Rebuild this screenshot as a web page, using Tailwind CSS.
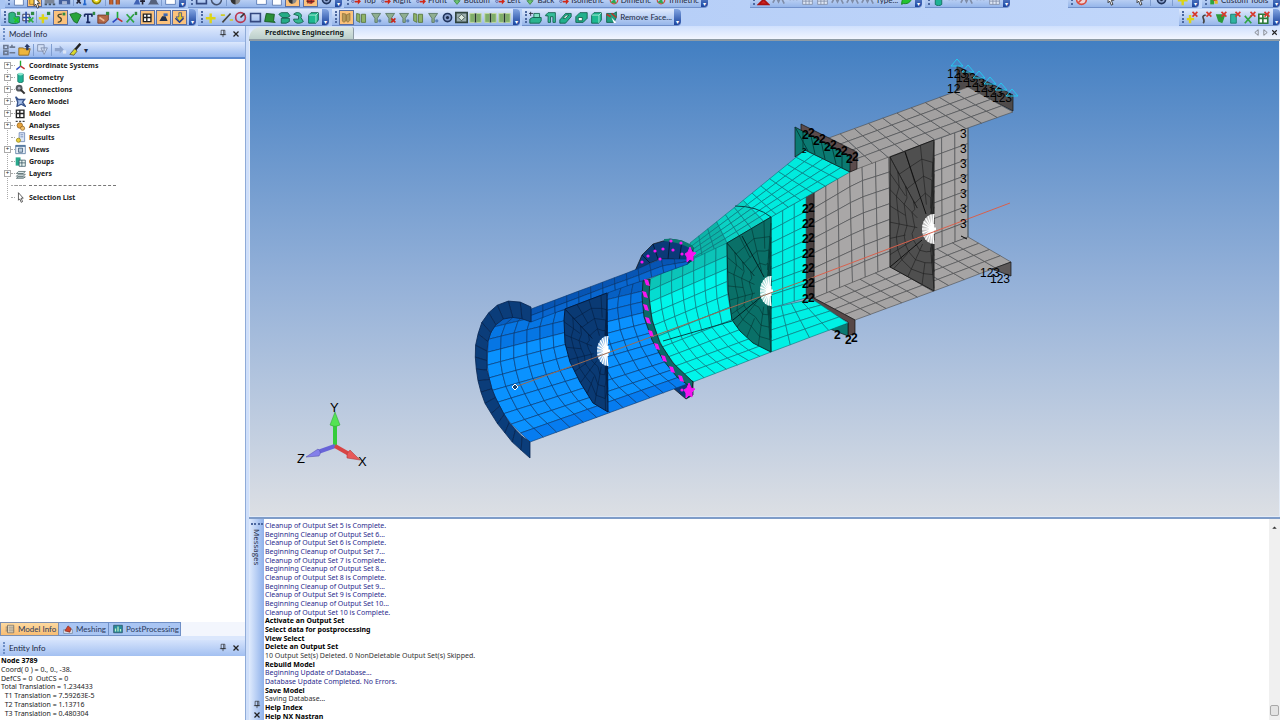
<!DOCTYPE html>
<html lang="en">

<head>
  <meta charset="UTF-8">
  <title>Predictive Engineering</title>
  <script src="https://cdn.jsdelivr.net/npm/@tailwindcss/browser@4"></script>
</head>

<body class="relative h-screen flex flex-col overflow-hidden bg-[#b9d0f8] text-[#1c2840] text-[8px] leading-none font-[Lato,sans-serif]">
  <header class="shrink-0 h-[26px] overflow-hidden bg-linear-to-r from-[#a9c5f3] to-[#c3d8fb]">
    <div class="flex -mt-2 h-4" id="rowTop"></div>
    <div class="flex mt-px h-[17px]" id="rowMain"></div>
  </header>
  <span class="absolute left-[30px] -top-1 w-[13px]" data-icon="cursor"></span>

  <div class="flex flex-1 min-h-0">
    <aside class="w-[245px] shrink-0 flex flex-col bg-white">
      <div class="flex items-center h-4 pl-[3px] pr-1 gap-[3px] bg-linear-to-b from-[#dfeafd] to-[#b3cbf5]">
        <span class="w-[3px] h-3 border-l-2 border-dotted border-[#6f8fc6]"></span>
        <h2 class="flex-1">Model Info</h2>
        <button class="w-[10px]" data-icon="pin" aria-label="Pin"></button>
        <button class="w-[10px]" data-icon="close" aria-label="Close"></button>
      </div>
      <div class="flex items-center h-[17px] pl-[3px] gap-[2px] border-b-2 border-[#5f8bd0] bg-linear-to-b from-[#dce8fd] to-[#98b8ee]" id="treeBar"></div>
      <ul class="relative flex-1 pl-1 font-bold font-['Noto_Sans',sans-serif] text-[#222]" id="tree"></ul>
      <div class="flex h-[14px] bg-[#f3f6fd] text-[#2b3a5c] whitespace-nowrap">
        <button class="flex items-center gap-[3px] pl-1 w-[59px] border border-[#7e8fae] bg-linear-to-b from-[#fcd9a0] to-[#f9bd72]"><span class="w-[10px] shrink-0" data-icon="list"></span>Model Info</button>
        <button class="flex items-center gap-[3px] pl-1 w-[50px] border border-l-0 border-[#6f8fc6] bg-[#a9c5f3]"><span class="w-[10px] shrink-0" data-icon="meshing"></span>Meshing</button>
        <button class="flex items-center gap-[3px] pl-1 w-[72px] border border-l-0 border-[#6f8fc6] bg-[#a9c5f3]"><span class="w-[10px] shrink-0" data-icon="post"></span>PostProcessing</button>
      </div>
      <div class="h-1 bg-[#dbe7fc]"></div>
      <div class="flex items-center h-4 pl-[3px] pr-1 gap-[3px] bg-linear-to-b from-[#d5e3fc] to-[#a3c0f1]">
        <span class="w-[3px] h-3 border-l-2 border-dotted border-[#6f8fc6]"></span>
        <h2 class="flex-1">Entity Info</h2>
        <button class="w-[10px]" data-icon="pin" aria-label="Pin"></button>
        <button class="w-[10px]" data-icon="close" aria-label="Close"></button>
      </div>
      <div class="h-[64px] shrink-0 pl-px pt-px pb-[2px] flex flex-col justify-between text-[7px] leading-[8px] text-[#222] whitespace-pre font-['Noto_Sans',sans-serif]">
        <b class="text-black">Node 3789</b>
        <span>Coord( 0 ) = 0., 0., -38.</span>
        <span>DefCS = 0  OutCS = 0</span>
        <span>Total Translation = 1.234433</span>
        <span>  T1 Translation = 7.59263E-5</span>
        <span>  T2 Translation = 1.13716</span>
        <span>  T3 Translation = 0.480304</span>
      </div>
    </aside>

    <div class="w-1 shrink-0 bg-[#cfdffa] border-l border-[#8fabd8]"></div>

    <main class="flex-1 min-w-0 flex flex-col">
      <div class="flex items-end h-[15px] shrink-0 border-b-2 border-[#8d9ba5] bg-linear-to-b from-[#cfe0fd] to-[#f2f6fe]">
        <h1 class="h-[12px] w-[105px] pl-4 rounded-tl-xl rounded-tr-xs border-r border-[#8d9ba5] bg-linear-to-b from-[#dde8e4] to-[#bccfcb] text-[7px] leading-[12px] font-bold text-[#16241f] whitespace-nowrap font-['Noto_Sans',sans-serif]">Predictive Engineering</h1>
        <div class="ml-auto flex pr-px self-center">
          <button class="w-[9px]" data-icon="prev" aria-label="Previous"></button>
          <button class="w-[9px]" data-icon="next" aria-label="Next"></button>
          <button class="w-[9px]" data-icon="close" aria-label="Close"></button>
        </div>
      </div>

      <div class="flex-1 min-h-0 border border-t-0 border-[#e3ebf7] bg-linear-to-b from-[#427fc2] via-[#93b0d8] to-[#dcdfe4]">
        <svg id="scene" class="block w-full h-full" viewBox="250 41 1029 475" stroke-linejoin="round"></svg>
      </div>

      <section class="h-[203px] shrink-0 flex overflow-hidden border-t-2 border-[#7f9cc8] bg-white">
        <div class="w-[15px] shrink-0 flex flex-col items-center pt-1 bg-linear-to-r from-[#e0ebfd] to-[#8fb1ea]">
          <span class="w-3 border-t-2 border-dotted border-[#4c68a0]"></span>
          <h2 class="mt-1 [writing-mode:vertical-rl] text-[8px] leading-[10px] font-['Open_Sans',sans-serif]">Messages</h2>
          <button class="mt-auto w-[10px]" data-icon="pin" aria-label="Pin"></button>
          <button class="w-[10px]" data-icon="close" aria-label="Close"></button>
        </div>
        <div class="flex-1 pl-px pt-[3px] -mb-px flex flex-col justify-between text-[7px] leading-[8px] whitespace-nowrap font-['Noto_Sans',sans-serif]" id="messages"></div>
        <div class="w-[11px] flex flex-col items-center bg-[#f0f0f0]">
          <span class="w-[9px] mt-1" data-icon="up"></span>
          <span class="w-[9px] h-[11px] mt-auto mb-1 rounded-xs border border-[#a8a8a8] bg-[#e4e4e4]"></span>
        </div>
      </section>
    </main>
  </div>

  <script>
    const X = '<path d="M8 1l6 6M14 1l-6 6" stroke="#d8382c" stroke-width="2"/>';
    const ICONS = {
      doc: '<path d="M3 1h8l3 3v11H3z" fill="#fff" stroke="#5672a8"/>',
      open: '<path d="M1 5h5l2 2h7l-3 8H1z" fill="#f5c64a" stroke="#8c6414"/>',
      save: '<path d="M1 2h14v12H1z" fill="#46619c"/><path d="M4 2h8v5H4z" fill="#dfe7f7"/><path d="M5 10h6v4H5z" fill="#aab8d6"/>',
      print: '<path d="M2 7h12v6H2z" fill="#7b8698"/><path d="M4 2h8v5H4z" fill="#fff" stroke="#667"/><path d="M2 14h3M7 14h3M12 14h3" stroke="#456" stroke-width="2"/>',
      num: '<path d="M2 13l5-6M2 7l5 6" stroke="#223" stroke-width="2"/><path d="M12 4v10M10 14h4" stroke="#2266cc" stroke-width="2"/>',
      gear: '<circle cx="8" cy="8" r="5" fill="#ecdc2c" stroke="#8a7d00" stroke-width="2"/><circle cx="8" cy="8" r="2" fill="#fff"/>',
      undo: '<path d="M2 14V7h4v7M10 14V7h4v7" fill="#c4622c" stroke="#823814"/>',
      sum: '<path d="M2 14l5-9 3 9z" fill="#3f62b4"/><path d="M13 6v8M10 10h6" stroke="#223" stroke-width="2"/>',
      hill: '<path d="M1 14c3-1 3-8 7-9 4 1 4 8 7 9z" fill="#56627c"/>',
      win: '<path d="M2 2h12v12H2z" fill="#fff" stroke="#4f72b0"/><path d="M2 2h12v3H2z" fill="#5c84c8"/>',
      rotate: '<path d="M3 5a6 6 0 1 0 9-1" fill="none" stroke="#44506c" stroke-width="2"/><path d="M8 1l6 1-3 5z" fill="#44506c"/>',
      shade: '<circle cx="8" cy="8" r="6" fill="#888"/><path d="M8 2a6 6 0 0 0 0 12z" fill="#333"/>',
      shadeRed: '<circle cx="8" cy="8" r="6" fill="#c83c2c"/><path d="M4 2v12M9 2v12M2 6h12M2 11h12" stroke="#502020"/>',
      layers: '<path d="M2 12l3-3h10l-3 3zM2 8l3-3h10l-3 3zM2 15l3-2h10l-3 2z" fill="#dfe9ea" stroke="#3d5558"/>',
      arrowRed: '<circle cx="3" cy="10" r="2" fill="none" stroke="#448"/><path d="M6 9h5V6l5 4-5 5v-3H6z" fill="#d02818"/>',
      arrowGreen: '<path d="M6 4h4v5h3l-5 6-5-6h3z" fill="#6cc070" stroke="#2c7c34"/>',
      globe: '<circle cx="8" cy="8" r="6" fill="none" stroke="#d84c40" stroke-width="2"/><path d="M2 12l10 2-3-8z" fill="#2fa850"/>',
      clock: '<circle cx="8" cy="8" r="6" fill="#f0d4d4" stroke="#d84c40" stroke-width="2"/><path d="M4 12l8-8" stroke="#d84c40" stroke-width="2"/>',
      pinRed: '<path d="M8 1v8M2 14l6-6 6 6z" fill="#c22" stroke="#a11" stroke-width="2"/>',
      tbl: '<path d="M2 3h12v11H2zM2 7h12M2 10h12M6 3v11M10 3v11" fill="#dfe7f4" stroke="#7f8da8"/>',
      wave: '<path d="M1 12l4-7 3 6 3-6 4 8" fill="none" stroke="#7f8da8" stroke-width="2"/>',
      leaf: '<path d="M2 14C2 6 6 2 15 2c0 8-4 12-11 11z" fill="#25c42f" stroke="#0e7a18"/>',
      cubes: '<path d="M1 3c3-2 6-2 8 0v4h5v7c-4 2-9 2-13 0z" fill="#2fb57f" stroke="#0e6846"/><path d="M7 8l6 6M13 8l-5 6" stroke="#22c522" stroke-width="2"/><path d="M11 1h4v4h-4z" fill="#3f9a4e"/>',
      move: '<path d="M1 4h8v8H1z" fill="#f5f8ff" stroke="#223"/><path d="M5 1v14M1 8h10" stroke="#2748a4" stroke-width="2"/><path d="M8 8l6 6M14 8l-6 6" stroke="#2fae40" stroke-width="2"/><path d="M11 1h4v4h-4z" fill="#2f8a42"/>',
      plus: '<path d="M7 3v12M1 9h12" stroke="#dcd416" stroke-width="3"/>',
      plusPt: '<path d="M6 4v11M1 9h11" stroke="#dcd416" stroke-width="3"/><path d="M11 1h4v4h-4z" fill="#2f8a42"/>',
      curve: '<path d="M10 3C2 3 4 7 7 8s4 6-3 7" fill="none" stroke="#4d4a30" stroke-width="2"/><path d="M11 1h4v4h-4z" fill="#2f8a42"/>',
      surf: '<path d="M1 4l8-2 6 3-5 10-4-2z" fill="#28a43a" stroke="#126420"/>',
      surfGreen: '<path d="M4 3l10 1-1 8 2 2-13-1z" fill="#2a8f38" stroke="#0f5019"/>',
      text: '<path d="M2 4h9v3M2 4v3M6 4v10M4 14h5" fill="none" stroke="#15255e" stroke-width="2"/><path d="M12 1h3v4h-3z" fill="#2f8a42"/>',
      brick: '<path d="M1 5h10l3-3v9l-4 4H1z" fill="#b26848" stroke="#6c3522"/><path d="M3 8l6 4" stroke="#eabb98" stroke-width="2"/><path d="M11 1h4v4h-4z" fill="#2f8a42"/>',
      csys: '<path d="M8 9V1" stroke="#21a832" stroke-width="2"/><path d="M8 9l-6 5" stroke="#2c48c2" stroke-width="2"/><path d="M8 9l6 4" stroke="#c22c2c" stroke-width="2"/>',
      node: '<path d="M2 4l9 10M11 4L2 14" stroke="#2fa542" stroke-width="2"/><path d="M12 1h3v4h-3z" fill="#2f8a42"/>',
      grid: '<path d="M2 3h11v11H2zM2 8h11M7 3v11" fill="#fff" stroke="#222" stroke-width="2"/>',
      load: '<path d="M2 13h12l-3-7H6z" fill="#20304c"/><path d="M8 2h6v4H8z" fill="#3c68b4"/>',
      down: '<path d="M7 1v6H3l5 7 6-7h-3V1z" fill="#e6c928" stroke="#27408c"/><path d="M2 9l6 6 6-6" stroke="#27408c" stroke-width="2"/>',
      line: '<path d="M3 14L13 3" stroke="#444" stroke-width="2"/><path d="M1 5h5M12 11h4" stroke="#cfcb27" stroke-width="2"/>',
      circle: '<circle cx="8" cy="8" r="6" fill="none" stroke="#ba3850" stroke-width="2"/><path d="M8 8l5-5" stroke="#333" stroke-width="2"/>',
      rect: '<path d="M2 3h12v10H2z" fill="none" stroke="#334880" stroke-width="2"/>',
      extrude: '<path d="M1 4l3-2h8l3 4-3 2H5zM4 9h10v4l-4 2H4z" fill="#25ac86" stroke="#0d5a45"/>',
      revolve: '<path d="M2 4c5-5 12 0 9 4l3 5c-5 4-12 2-12-3h6V6z" fill="#35b890" stroke="#0d5a45"/>',
      block: '<path d="M2 5l3-3h9v9l-3 4H2z" fill="#1db990" stroke="#0a5a45"/><path d="M2 5h9v10M11 5l3-3" fill="none" stroke="#bff3e2"/>',
      panel: '<path d="M2 3l4 1v10l-4-2zM8 4h5v10H8z" fill="#8fb468" stroke="#56733a"/>',
      panelOn: '<path d="M2 2l5 1v10l-3 2-2-2zM8 4l5-2v10l-3 3-2-2z" fill="#b79a58" stroke="#8a6c34"/>',
      funnel: '<path d="M2 3h11L9 9v5H6V9z" fill="#8fae90" stroke="#54735e"/><circle cx="12" cy="12" r="2" fill="#5d83bc"/>',
      funnelX: '<path d="M2 3h11L9 9v5H6V9z" fill="#8fae90" stroke="#54735e"/><path d="M9 9l5 5M14 9l-5 5" stroke="#c8281c" stroke-width="2"/>',
      target: '<circle cx="8" cy="8" r="5" fill="#8aa0cc" stroke="#20345c" stroke-width="2"/><circle cx="8" cy="8" r="2" fill="#1c2c4c"/>',
      boxT: '<path d="M1 2h14v12H1z" fill="#9dafb0" stroke="#30443e" stroke-width="2"/><path d="M8 4l4 4-4 4-4-4z" fill="#dde9de" stroke="#30443e"/>',
      bars: '<path d="M1 3h6v11H1zM9 3h6v11H9z" fill="#7fae6a" stroke="#c9dca0"/><path d="M8 3v11" stroke="#23372c" stroke-width="2"/>',
      csave: '<path d="M1 10l3-2h11v4l-2 3H1z" fill="#2bb48f" stroke="#0c5a45"/><path d="M6 3h7v5H6z" fill="#7fe0c3" stroke="#0c5a45"/><path d="M2 1v5M0 3h5" stroke="#223"/>',
      arch: '<path d="M2 5l3-3h9v12h-3V7H8v7H5V6H2z" fill="#35bd99" stroke="#0c5a45"/>',
      slab: '<path d="M1 11l7-8h7v4l-7 8H1z" fill="#22b08c" stroke="#0c5a45"/><path d="M5 9l4-4h3l-4 4z" fill="#fff" stroke="#0c5a45"/>',
      shell: '<path d="M1 7l5-5h9v7l-5 5H1z" fill="#22b08c" stroke="#0c5a45"/><path d="M4 8h5v4H4z" fill="#fff" stroke="#0c5a45"/>',
      delFace: '<path d="M2 3h9l3-2v7l-3 6H2z" fill="#22a080" stroke="#0c5a45"/><path d="M2 4l5 3M8 3l6 5" stroke="#b8382c" stroke-width="2"/><path d="M8 8l6 6-3 1z" fill="#fff"/>',
      delPlus: '<path d="M5 5v10M1 10h9" stroke="#dcd416" stroke-width="3"/>' + X,
      delCurve: '<path d="M7 5c-8 2 1 5-3 10" fill="none" stroke="#444" stroke-width="2"/>' + X,
      delSurf: '<path d="M1 4h12l-4 11-5-2z" fill="#2c9a3a"/>' + X,
      delSolid: '<path d="M2 4h7v11H2z" fill="#2fb3a0" stroke="#176"/>' + X,
      delNode: '<path d="M1 6l8 9M9 6l-8 9" stroke="#2fa542" stroke-width="2"/>' + X,
      delGrid: '<path d="M1 4h11v11H1zM1 9h11M6 4v11" fill="#fff" stroke="#2b7a38" stroke-width="2"/>' + X,
      cursor: '<path d="M5 1l7 8H9l2 5-2 1-2-5-2 2z" fill="#fff" stroke="#222"/>',
      tools: '<path d="M2 8h6v7H2z" fill="#2fa53c"/><circle cx="10" cy="6" r="4" fill="#d2402c"/><path d="M9 9h5v5H9z" fill="#e8b824"/>',
      geom: '<path d="M4 3h8v11c-2 2-6 2-8 0z" fill="#1fb295" stroke="#0d6856"/><ellipse cx="8" cy="3" rx="4" ry="2" fill="#8be6cf"/>',
      conn: '<circle cx="6" cy="6" r="5" fill="#555b60"/><circle cx="6" cy="6" r="2" fill="#aab"/><path d="M8 8l6 6" stroke="#333" stroke-width="3"/>',
      aero: '<path d="M1 1l4 4h9l-3 4 4 6-6-3-6 3 1-6z" fill="#a8c1ea" stroke="#38548c" stroke-width="2"/>',
      anal: '<path d="M1 2h3M6 2h3M11 2h3" stroke="#444" stroke-width="2"/><circle cx="7" cy="8" r="4" fill="#e6a33c" stroke="#8c5b14"/><circle cx="11" cy="12" r="3" fill="#f0c06c" stroke="#8c5b14"/>',
      results: '<path d="M6 1h8v13H6z" fill="#dbe5f5" stroke="#5672a8"/><path d="M8 4h4M8 7h4" stroke="#5672a8"/><circle cx="5" cy="12" r="3" fill="#e8cd44" stroke="#8a7d00"/>',
      views: '<path d="M1 2h14v12H1z" fill="#eef4fb" stroke="#3d6590"/><path d="M1 2h14v2H1z" fill="#3d6590"/><path d="M5 6h6v6H5z" fill="#bcd" stroke="#246"/>',
      groups: '<path d="M1 2h7v12H1z" fill="#28a98c"/><path d="M6 6h9v9H6zM6 10h9M10 6v9" fill="#eaf5f0" stroke="#245"/>',
      list: '<path d="M4 2h10v12H4zM6 5h8M6 8h8M6 11h8M1 5h4M1 8h4M1 11h4" fill="#f4e3c4" stroke="#555"/>',
      meshing: '<path d="M1 9h14v6H1z" fill="#dfe6f3" stroke="#678"/><path d="M3 11l5-8 5 4-2 6z" fill="#d0442c" stroke="#7c2014"/>',
      post: '<path d="M1 2h14v12H1z" fill="#2a8c9c" stroke="#245"/><path d="M4 12V7M8 12V4M12 12V8" stroke="#bff0c0" stroke-width="2"/>',
      form: '<path d="M1 3h5v4H1zM1 10h5v4H1zM8 5h7M8 12h7M11 2v4" fill="none" stroke="#6b7890" stroke-width="2"/>',
      folderUp: '<path d="M1 6h5l2 1h7l-2 8H1z" fill="#efb63c" stroke="#85601a"/><path d="M11 1l4 4h-2v4h-3V5H8z" fill="#283a68"/>',
      copy: '<path d="M2 2h8v8H2zM6 6h8l-4 8z" fill="#d2dff5" stroke="#7a89a8"/>',
      arrow: '<path d="M1 6h6V3l5 5-5 5v-3H1z" fill="#8ea4cc"/><path d="M11 9h4v4h-4z" fill="#dbe5f5"/>',
      brush: '<path d="M14 1L7 9" stroke="#222" stroke-width="3"/><path d="M1 14l6-7 3 3-4 5z" fill="#d9d92c" stroke="#554"/>',
      pin: '<path d="M5 2h6v7H5zM9 2v7M3 9h10M8 9v4" fill="none" stroke="#222"/>',
      close: '<path d="M4 4l8 8M12 4l-8 8" stroke="#222" stroke-width="2"/>',
      prev: '<path d="M11 3v10L5 8z" fill="none" stroke="#444"/>',
      next: '<path d="M5 3v10l6-5z" fill="none" stroke="#444"/>',
      up: '<path d="M4 10l4-4 4 4z" fill="#333"/>',
      dots: '<path d="M3 8h2M7 8h2M11 8h2" stroke="#8090b0" stroke-width="2"/>',
    };
    const svg = name => `<svg viewBox="0 0 16 16" class="block w-full" fill="none">${ICONS[name]}</svg>`;
    document.querySelectorAll('[data-icon]').forEach(el => el.insertAdjacentHTML('afterbegin', svg(el.dataset.icon)));

    // "*" = pressed, "|" = separator, "name:Label" = labelled button, "#" = filler
    const item = s => {
      if (s === '|') return '<span class="w-px h-3 bg-[#7f9dd0]"></span>';
      if (s === '#') return '<span class="w-2"></span>';
      const on = s[0] === '*';
      const [name, label] = s.replace('*', '').split(':');
      if (label) return `<button class="flex items-center gap-[2px] whitespace-nowrap">${name ? `<span class="w-[10px]">${svg(name)}</span>` : ''}${label}</button>`;
      return `<button aria-label="${name}" class="${on ? 'w-[15px] h-[15px] p-px border border-[#5a6ea0] bg-[#fbc27c]' : 'w-[13px]'}">${svg(name)}</button>`;
    };
    const bar = (width, items) => `
      <div class="${width} shrink-0 flex items-stretch rounded-r-sm bg-linear-to-b from-[#dfe9fc] to-[#96b6ea] border-b border-[#7191cb]">
        <span class="my-[2px] ml-[3px] border-l-2 border-dotted border-[#4c68a0]"></span>
        <div class="flex-1 min-w-0 px-[2px] flex items-center justify-between">${items.map(item).join('')}</div>
        <button aria-label="More" class="w-[7px] rounded-r-sm bg-linear-to-b from-[#84a6e2] to-[#1c429c] flex items-end justify-center text-white text-[6px]">▾</button>
      </div>`;
    const gap = w => `<div class="${w} shrink-0"></div>`;

    document.getElementById('rowTop').innerHTML =
      gap('w-[5px]') +
      bar('w-[181px]', ['doc', '*open', 'print', 'save', '|', 'num', 'gear', '|', 'undo', '#', 'sum', 'hill', '|', 'win']) + gap('w-[2px]') +
      bar('w-[154px]', ['rect', 'rotate', '|', 'shade', '#', 'win', 'doc', '*shade', '*shadeRed', 'target']) + gap('w-[2px]') +
      bar('w-[364px]', ['arrowRed:Top', 'arrowRed:Right', 'arrowRed:Front', 'arrowGreen:Bottom', 'arrowRed:Left', 'arrowGreen:Back', 'arrowRed:Isometric', 'globe:Dimetric', 'globe:Trimetric']) + gap('w-[42px]') +
      bar('w-[172px]', ['pinRed', 'wave', 'dots', 'tbl', 'tbl', 'wave', 'wave', 'wave', ':Type...', 'leaf']) + gap('w-[3px]') +
      bar('w-[85px]', ['geom', 'dots', 'wave', 'dots', 'tbl']) +
      '<div class="flex-1"></div>' +
      bar('w-[131px]', ['clock', '#', 'cursor', '#', 'cursor', '|', 'target', '|', 'plus']) + gap('w-[3px]') +
      bar('w-[78px]', ['tools:Custom Tools']);

    document.getElementById('rowMain').innerHTML =
      gap('w-[1px]') +
      bar('w-[195px]', ['cubes', 'move', '|', 'plusPt', '*curve', 'surf', 'text', 'brick', 'csys', 'node', '*grid', '*load', '*down']) + gap('w-[2px]') +
      bar('w-[131px]', ['plus', 'line', 'circle', 'rect', 'surfGreen', 'extrude', 'revolve', 'block']) + gap('w-[3px]') +
      bar('w-[188px]', ['*panelOn', 'panel', 'funnel', 'funnelX', 'funnel', 'panel', 'funnel', 'target', 'boxT', 'bars', 'bars', 'bars']) + gap('w-[2px]') +
      bar('w-[159px]', ['csave', 'arch', 'slab', 'shell', 'block', 'delFace', ':Remove Face...']) +
      '<div class="flex-1"></div>' +
      bar('w-[101px]', ['delPlus', 'delCurve', 'delSurf', 'delSolid', 'delNode', 'delGrid']);

    document.getElementById('treeBar').innerHTML = ['form', 'folderUp', '|', 'copy', '|', 'arrow', 'brush'].map(item).join('') + '▾';

    const TREE = [
      ['Coordinate Systems', 'csys', 1], ['Geometry', 'geom', 1], ['Connections', 'conn', 1], ['Aero Model', 'aero', 1],
      ['Model', 'grid', 1], ['Analyses', 'anal', 1], ['Results', 'results', 0], ['Views', 'views', 1],
      ['Groups', 'groups', 0], ['Layers', 'layers', 1], ['', '', 0], ['Selection List', 'cursor', 0],
    ];
    document.getElementById('tree').innerHTML =
      '<li class="absolute left-[7px] top-2 h-[132px] border-l border-dotted border-[#aaa]"></li>' +
      TREE.map(([label, icon, open]) => `
      <li class="relative flex items-center h-3">
        ${open ? '<button aria-label="Expand" class="w-[7px] h-[7px] border border-[#aaa] bg-white flex items-center justify-center text-[6px] leading-none font-normal">+</button>' : '<span class="w-[7px] h-px"></span>'}
        <span class="w-1 border-t border-dotted border-[#aaa]"></span>
        <span class="w-[11px] ${icon ? '' : 'border-t border-dashed border-[#999]'}">${icon ? svg(icon) : ''}</span>
        ${label ? `<span class="ml-[3px] text-[7px]">${label}</span>` : '<span class="ml-[3px] w-[87px] border-t border-dashed border-[#777]"></span>'}
      </li>`).join('');

    const LOG = ['Cleanup of Output Set 5 is Complete.'];
    for (let i = 6; i <= 10; i++) LOG.push(`Beginning Cleanup of Output Set ${i}...`, `Cleanup of Output Set ${i} is Complete.`);
    LOG.push('*Activate an Output Set', '*Select data for postprocessing', '*View Select', '*Delete an Output Set',
      '-10 Output Set(s) Deleted. 0 NonDeletable Output Set(s) Skipped.', '*Rebuild Model', 'Beginning Update of Database...',
      'Database Update Completed. No Errors.', '*Save Model', '-Saving Database...', '*Help Index', '*Help NX Nastran');
    document.getElementById('messages').innerHTML = LOG.map(t =>
      t[0] === '*' ? `<b class="text-black">${t.slice(1)}</b>` :
      t[0] === '-' ? `<span class="text-[#333]">${t.slice(1)}</span>` :
      `<span class="text-[#2a2a8c]">${t}</span>`).join('');

    // ---- model view ----
    const out = [];
    const poly = (pts, fill, stroke = '#111', w = 0.7) =>
      out.push(`<path d="M${pts.map(p => p.map(n => n.toFixed(1)).join(' ')).join('L')}Z" fill="${fill}" stroke="${stroke}" stroke-width="${w}"/>`);
    const lerp = (a, b, t) => [a[0] + (b[0] - a[0]) * t, a[1] + (b[1] - a[1]) * t];
    const at = (line, t) => {
      const len = line.slice(1).map((p, i) => Math.hypot(p[0] - line[i][0], p[1] - line[i][1]));
      let d = t * len.reduce((a, b) => a + b, 0);
      for (let i = 0; i < len.length; i++) {
        if (d <= len[i] || i === len.length - 1) return lerp(line[i], line[i + 1], len[i] ? Math.min(1, d / len[i]) : 0);
        d -= len[i];
      }
    };
    // ruled surface between polylines a and b: n cells along them, m cells across
    const patch = (a, b, n, m, color, stroke = '#12324a', w = 0.6) => {
      for (let i = 0; i < n; i++) for (let j = 0; j < m; j++) {
        const q = (u, v) => lerp(at(a, u / n), at(b, u / n), v / m);
        poly([q(i, j), q(i + 1, j), q(i + 1, j + 1), q(i, j + 1)], typeof color === 'function' ? color(i / n, j / m) : color, stroke, w);
      }
    };
    const txt = (x, y, s, size = 12, bold = false) =>
      out.push(`<text x="${x}" y="${y}" font-size="${size}" font-family="Liberation Sans, sans-serif" fill="#000"${bold ? ' font-weight="bold"' : ''}>${s}</text>`);
    // rigid spider: half disc of spokes, flat on its right side
    const hub = (x, y, rx, ry, base) => {
      out.push(`<path d="M${x + 4} ${y - ry}A${rx} ${ry} 0 0 0 ${x + 4} ${y + ry}Z" fill="${base}"/>`);
      for (let k = 0; k < 13; k++) {
        const a = Math.PI / 2 + k * Math.PI / 12;
        out.push(`<path d="M${x + 2} ${y}L${x + 4 + rx * Math.cos(a)} ${y + ry * Math.sin(a)}" stroke="#fff" stroke-width="1.2"/>`);
      }
      out.push(`<path d="M${x + 3} ${y - 5}v10M${x - 1} ${y}h7" stroke="#fff" stroke-width="3"/>`);
    };
    // diaphragm: irregular fan mesh around its hub
    const diaphragm = (edge, hubPt, fill, stroke) => {
      poly(edge, fill, stroke, 1);
      const loop = [...edge, edge[0]];
      const ring = f => Array.from({ length: 23 }, (_, k) => lerp(hubPt, at(loop, k / 22), f + (f < 0.9 ? (k % 3 - 1) * 0.035 : 0)));
      [0.4, 0.6, 0.8].forEach(f => poly(ring(f), 'none', stroke, 0.6));
      ring(1).forEach((p, k) => {
        const s = lerp(hubPt, p, k % 2 ? 0.6 : 0.3);
        out.push(`<path d="M${s}L${p}" stroke="${stroke}" stroke-width="0.6"/>`);
      });
    };

    // grey I-beam
    const GREY = '#a9a7a7', LN = '#4a4a4a';
    poly([[957, 66], [1013, 95], [1013, 111], [968, 88], [957, 93]], '#4e4a4a');
    patch([[814, 193], [857, 166], [890, 156], [968, 128]], [[814, 298], [857, 281], [890, 267], [968, 237]], 12, 7, GREY, LN);
    patch([[826, 139], [968, 87]], [[857, 169], [934, 140], [1013, 112]], 10, 4, '#a3a1a1', LN);
    patch([[814, 298], [890, 267], [968, 237]], [[855, 320], [934, 291], [1011, 262]], 10, 4, '#a6a4a4', LN);
    poly([[1011, 262], [1011, 276], [992, 269]], '#5c5858');
    diaphragm([[890, 157], [934, 140], [934, 291], [890, 267]], [929, 230], '#4f4f4f', '#1c1c1c');
    out.push('<path d="M905 152L926 214M890 267L922 240M934 111" stroke="#111"/>');
    hub(930, 229, 12, 15, '#c4c4c4');

    // joint plates
    poly([[801, 124], [857, 152], [857, 169], [850, 172], [801, 150]], '#5b4b4b');
    poly([[805, 197], [814, 191], [814, 300], [806, 298]], '#4a4040');
    poly([[812, 297], [855, 320], [855, 333], [848, 336], [848, 322], [812, 302]], '#574848');
    poly([[848, 323], [848, 336], [830, 329]], '#0b7a72');

    // cyan transition
    const CY = '#00f0e4', CL = '#0a7076';
    patch([[771, 217], [806, 197]], [[771, 308], [806, 298]], 3, 7, CY, CL);
    patch([[771, 308], [812, 299]], [[771, 352], [848, 323]], 4, 4, CY, CL);
    patch([[690, 243], [735, 207], [805, 150]], [[690, 264], [727, 243], [771, 217], [850, 172]], 13, 5,
      t => t < .2 ? '#0cb4a8' : t < .45 ? '#0ad2c4' : '#00ebde', CL);
    patch([[650, 279], [649, 297], [652, 320], [660, 343], [673, 363], [693, 382]],
      [[727, 243], [727, 290], [732, 320], [753, 343], [771, 352]], 10, 7, t => t < .1 ? '#0cc4b8' : t < .2 ? '#05dcd0' : '#00f6ea', CL);
    out.push('<path d="M663 341L732 321M735 206Q757 206 771 217" fill="none" stroke="#064448"/>');
    poly([[795, 127], [850, 156], [850, 172], [805, 150], [795, 157]], '#0b7a72');
    out.push('<path d="M803 131v18M811 136l4 18M821 141l4 18M832 147l4 17M842 152v16M795 127l13 24" stroke="#04403c"/>');
    diaphragm([[727, 243], [771, 217], [771, 352], [753, 343], [740, 331], [732, 320], [728, 290]], [766, 290], '#0a7068', '#043430');
    out.push('<path d="M742 236L764 277M733 320L761 297" stroke="#022"/>');
    hub(767, 291, 11, 15, '#a8dcd8');

    // blue cylinder
    const BL = '#06346c';
    poly([[635, 271], [642, 255], [653, 244], [670, 239], [682, 241], [693, 247], [693, 260], [687, 264], [673, 259], [660, 259], [650, 263]], '#0b3a78');
    out.push('<path d="M642 255l8 8M653 244l5 15M670 239l-2 20M682 241l-3 20" stroke="#051c3c"/><path d="M664 239q16-2 29 7v4q-12-8-29-9z" fill="#0b7a72"/>');
    poly([[673, 388], [693, 381], [693, 395], [686, 399]], '#0b3a78');
    patch([[503, 319], [493, 327], [488, 340], [487, 370], [493, 393], [507, 420], [530, 442]],
      [[645, 280], [643, 297], [646, 320], [655, 343], [668, 365], [690, 383]], 11, 12,
      t => t < .08 ? '#0660c4' : t < .26 ? '#0676e4' : t > .85 ? '#067cf0' : '#0a92ff', BL);
    patch([[531, 309], [635, 270], [660, 259], [687, 259]], [[531, 322], [607, 293], [647, 279], [688, 264]], 13, 2, (u, v) => v < .5 ? '#0755b4' : '#0866cf', BL);
    diaphragm([[565, 309], [607, 293], [608, 412], [593, 403], [580, 382], [570, 362], [565, 343], [564, 320]], [604, 351], '#0a3a74', '#041c40');
    hub(604, 351, 11, 15, '#86b4e0');
    patch([[531, 307], [520, 302], [507, 301], [493, 307], [482, 322], [476, 340], [475, 353], [477, 377], [483, 400], [497, 423], [513, 443], [530, 458]],
      [[531, 322], [523, 319], [515, 317], [503, 319], [493, 327], [488, 340], [487, 353], [487, 370], [493, 393], [507, 420], [520, 435], [530, 442]], 18, 1, '#0b3d7a', '#062450', 0.8);
    poly([[643, 281], [642, 297], [644, 317], [652, 340], [663, 360], [677, 377], [692, 388], [693, 382], [673, 363], [660, 343], [652, 320], [649, 297], [650, 279]], '#0b6a68');
    const mg = (x, y, r = 2) => out.push(`<circle cx="${x}" cy="${y}" r="${r}" fill="#f614f0"/>`);
    [[642, 262], [648, 256], [655, 251], [663, 249], [673, 250], [682, 254], [671, 241], [681, 243], [660, 259], [682, 390]].forEach(p => mg(...p, 1.6));
    [[646, 282], [644, 294], [645, 307], [647, 320], [650, 333], [656, 346], [663, 358], [671, 369], [680, 378]].forEach(([x, y]) =>
      out.push(`<path d="M${x - 2} ${y - 3}l4 1 2 6-4-1z" fill="#f614f0"/>`));
    ['690 247', '689 383'].forEach(p => out.push(`<path d="M${p}l2 5 4 1-3 3v5l-3-2-3 3v-5l-2-3 3-2z" fill="#f614f0" stroke="#f614f0"/>`));

    // centre line and origin
    out.push('<path d="M515 387L814 277" stroke="#9a6a52" stroke-width="1"/><path d="M814 277L1010 203" stroke="#d8604c" stroke-width="1"/>');
    out.push('<path d="M515 384l3 3-3 3-3-3z" fill="#147" stroke="#fff"/>');

    // constraint markers
    for (let i = 0; i < 6; i++) {
      out.push(`<path d="M${951 + i * 11} ${66 + i * 6}l6-7 6 7z" fill="none" stroke="#24c8f0"/>`);
      if (i < 5) txt(956 + i * 9, 82 + i * 5, '123', 12);
    }
    txt(947, 78, '123', 12); txt(947, 93, '12', 12);
    for (let y = 138; y < 235; y += 15) txt(960, y, '3', 12);
    out.push('<path d="M968 128V237" stroke="#52606a"/><path d="M961 236l6 3" stroke="#000"/>');
    txt(980, 277, '123', 12); txt(990, 283, '123', 12);
    for (let i = 0; i < 5; i++) { txt(802 + i * 11, 139 + i * 6, '2', 12, true); txt(808 + i * 11, 137 + i * 6, '2', 12, true); }
    txt(802, 153, '2', 8, true);
    for (let i = 0; i < 7; i++) { txt(802, 213 + i * 15, '2', 12, true); txt(808, 212 + i * 15, '2', 12, true); }
    txt(834, 339, '2', 12, true); txt(845, 344, '2', 12, true); txt(851, 342, '2', 12, true);

    // view triad
    out.push(`<path d="M335 446V424" stroke="#35cc3c" stroke-width="4"/><path d="M335 412l5 13q-5 3-10 0z" fill="#54e354" stroke="#2a9c34" stroke-width="0.5"/>
      <path d="M335 446l-17 6" stroke="#6864d8" stroke-width="4"/><path d="M306 457l12-8q4 3 1 7z" fill="#8480ea" stroke="#4c48a8" stroke-width="0.5"/>
      <path d="M335 446l14 8" stroke="#d84444" stroke-width="4"/><path d="M360 460l-13-2q-1-5 3-8z" fill="#e85858" stroke="#a43030" stroke-width="0.5"/>`);
    txt(330, 412, 'Y', 13); txt(297, 463, 'Z', 13); txt(358, 466, 'X', 13);

    document.getElementById('scene').innerHTML = out.join('');
  </script>
</body>

</html>
